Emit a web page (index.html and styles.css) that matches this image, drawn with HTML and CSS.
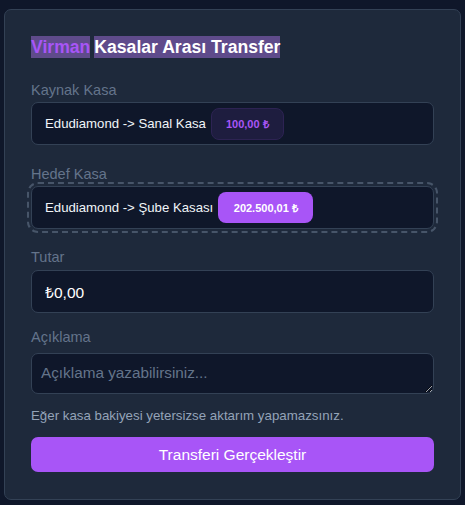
FILE: index.html
```html
<!DOCTYPE html>
<html lang="tr">
<head>
<meta charset="utf-8">
<title>Virman</title>
<link rel="stylesheet" href="styles.css">
</head>
<body>
<div class="card">
  <h2 class="title"><span class="hl accent">Virman</span><span class="hl">Kasalar Arası Transfer</span></h2>

  <label class="label l-source">Kaynak Kasa</label>
  <div class="box">
    <span class="box-text">Edudiamond -&gt; Sanal Kasa</span>
    <span class="badge badge-soft">100,00 ₺</span>
  </div>

  <label class="label l-target">Hedef Kasa</label>
  <div class="box dashed">
    <span class="box-text">Edudiamond -&gt; Şube Kasası</span>
    <span class="badge badge-solid">202.500,01 ₺</span>
  </div>

  <label class="label l-amount">Tutar</label>
  <input class="input" type="text" value="₺0,00">

  <label class="label l-desc">Açıklama</label>
  <textarea class="textarea" rows="1" placeholder="Açıklama yazabilirsiniz..."></textarea>

  <p class="help">Eğer kasa bakiyesi yetersizse aktarım yapamazsınız.</p>

  <button class="btn" type="button">Transferi Gerçekleştir</button>
</div>
</body>
</html>
```

FILE: styles.css
```css
* { box-sizing: border-box; }
html, body { margin: 0; }
body {
  background: #0f172a;
  padding: 9px 4px 5px 4px;
  font-family: "Liberation Sans", Arial, sans-serif;
  color: #e2e8f0;
}
.card {
  background: #1e293b;
  border: 1px solid #334155;
  border-radius: 7px;
  padding: 26px;
  height: 491px;
  display: flex;
  flex-direction: column;
}
.title {
  margin: 0;
  display: flex;
  gap: 4px;
  font-size: 17.6px;
  font-weight: bold;
  line-height: 22px;
  color: #ffffff;
}
.hl { background: #5f4b8b; }
.accent { color: #a855f7; }
.label {
  display: block;
  font-size: 14.5px;
  line-height: 18px;
  color: #64748b;
  margin: 20px 0 3px 0;
}
.l-source { margin-top: 23px; }
.l-target { margin-top: 20px; }
.l-amount { margin-top: 19px; margin-bottom: 4px; }
.l-desc { margin-top: 15px; margin-bottom: 7px; }
.box {
  height: 43px;
  display: flex;
  align-items: center;
  gap: 5px;
  padding: 0 13px;
  background: #0f172a;
  border: 1px solid #334155;
  border-radius: 7px;
}
.box.dashed {
  outline: 2px dashed #475569;
  outline-offset: 2px;
}
.box-text {
  font-size: 13.2px;
  color: #f1f5f9;
}
.badge {
  display: inline-flex;
  align-items: center;
  font-size: 11px;
  font-weight: bold;
  border-radius: 8px;
}
.badge-soft {
  height: 32px;
  padding: 0 14px;
  background: #1e1d3f;
  border: 1px solid #2d2353;
  color: #a855f7;
}
.badge-solid {
  height: 31px;
  padding: 0 15.5px;
  background: #a855f7;
  color: #ffffff;
}
.input {
  height: 43px;
  width: 100%;
  padding: 0 13px;
  background: #0f172a;
  border: 1px solid #334155;
  border-radius: 7px;
  font-family: inherit;
  font-size: 15.5px;
  color: #ffffff;
  margin: 0;
}
.textarea {
  display: block;
  width: 100%;
  height: 41px;
  margin: 0;
  padding: 10px 9px;
  background: #0f172a;
  border: 1px solid #334155;
  border-radius: 7px;
  font-family: inherit;
  font-size: 15.3px;
  line-height: 18px;
  color: #ffffff;
  resize: vertical;
}
.textarea::placeholder { color: #64748b; }
.help {
  margin: 14px 0 0 0;
  font-size: 13.3px;
  line-height: 15px;
  color: #94a3b8;
}
.btn {
  margin-top: 14px;
  height: 35px;
  width: 100%;
  border: 0;
  border-radius: 7px;
  background: #a855f7;
  color: #ffffff;
  font-family: inherit;
  font-size: 15.5px;
}
```
